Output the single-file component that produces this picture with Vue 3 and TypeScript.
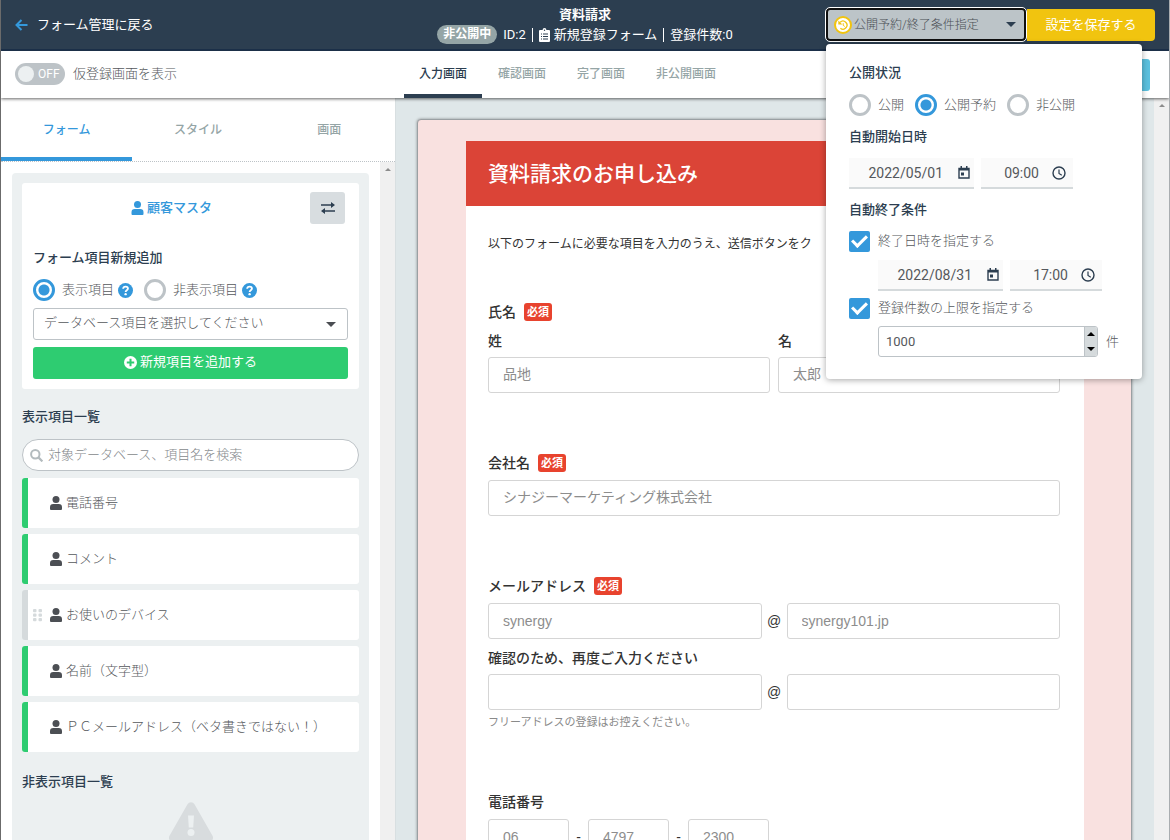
<script setup lang="ts">
import { ref } from 'vue'

interface FieldItem {
  name: string
  color: 'green' | 'gray'
  draggable?: boolean
}

const sideTabs = ['フォーム', 'スタイル', '画面']
const screenTabs = ['入力画面', '確認画面', '完了画面', '非公開画面']
const activeSide = ref(0)
const activeScreen = ref(0)
const provisional = ref(false)
const fieldKind = ref('show')
const status = ref('reserved')
const useEndDate = ref(true)
const useLimit = ref(true)
const limit = ref(1000)
const keyword = ref('')
const menuOpen = ref(true)

const items: FieldItem[] = [
  { name: '電話番号', color: 'green' },
  { name: 'コメント', color: 'green' },
  { name: 'お使いのデバイス', color: 'gray', draggable: true },
  { name: '名前（文字型）', color: 'green' },
  { name: 'ＰＣメールアドレス（ベタ書きではない！）', color: 'green' },
]
const statuses = [
  { id: 'public', label: '公開' },
  { id: 'reserved', label: '公開予約' },
  { id: 'private', label: '非公開' },
]
const kinds = [
  { id: 'show', label: '表示項目' },
  { id: 'hide', label: '非表示項目' },
]
</script>

<template>
  <div class="app">
    <header class="topbar">
      <a class="back" href="#">
        <svg width="13" height="12" viewBox="0 0 13 12" aria-hidden="true">
          <path d="M6.5 1 1.5 6l5 5M2 6h10.5" fill="none" stroke="#3498db" stroke-width="2" />
        </svg>
        フォーム管理に戻る
      </a>
      <div class="heading">
        <h1>資料請求</h1>
        <p class="meta">
          <span class="pill">非公開中</span>
          <span>ID:2</span>
          <i class="sep"></i>
          <span class="clip">
            <svg width="11" height="14" viewBox="0 0 11 14" aria-hidden="true">
              <path d="M1 2h2.6a1.9 1.9 0 0 1 3.8 0H10a1 1 0 0 1 1 1v10a1 1 0 0 1-1 1H1a1 1 0 0 1-1-1V3a1 1 0 0 1 1-1z" fill="#fff" />
              <path d="M2 6h1M4 6h5M2 8.5h1M4 8.5h5M2 11h1M4 11h5" stroke="#2c3e50" />
              <circle cx="5.500" cy="2.200" r=".7" fill="#2c3e50" />
            </svg>
            新規登録フォーム
          </span>
          <i class="sep"></i>
          <span>登録件数:0</span>
        </p>
      </div>
      <div class="actions">
        <button class="reserve" type="button" :aria-expanded="menuOpen" @click="menuOpen = !menuOpen">
          <svg width="18" height="18" viewBox="0 0 18 18" aria-hidden="true">
            <circle cx="9" cy="9" r="8" fill="#fff" stroke="#f1c40f" stroke-width="2" />
            <path d="M6.200 6.200A4 4 0 1 1 6.400 12.200" fill="none" stroke="#f1c40f" stroke-width="1.300" />
            <path d="M4.300 4.600v4h4z" fill="#f1c40f" />
            <path d="M9.200 7.200v2.200l1.500 1" fill="none" stroke="#f1c40f" />
          </svg>
          <span>公開予約/終了条件指定</span>
          <i class="caret"></i>
        </button>
        <button class="save" type="button">設定を保存する</button>

        <section v-if="menuOpen" class="popover">
          <h2>公開状況</h2>
          <div class="choices">
            <label v-for="s in statuses" :key="s.id">
              <input v-model="status" type="radio" name="status" :value="s.id" />{{ s.label }}
            </label>
          </div>
          <h2>自動開始日時</h2>
          <div class="when">
            <div class="picker date">
              <input type="text" value="2022/05/01" aria-label="自動開始日" />
              <svg width="12" height="13" viewBox="0 0 12 13" aria-hidden="true"><path d="M1 2.500h10v9.500H1z" fill="none" stroke="#2c3e50" stroke-width="1.400" /><path d="M1 2h10v2.500H1zM2.500 0h1.500v2H2.500zM8 0h1.500v2H8zM3 6.500h3v3H3z" fill="#2c3e50" /></svg>
            </div>
            <div class="picker time">
              <input type="text" value="09:00" aria-label="自動開始時刻" />
              <svg width="14" height="14" viewBox="0 0 14 14" aria-hidden="true"><circle cx="7" cy="7" r="6" fill="none" stroke="#2c3e50" stroke-width="1.400" /><path d="M7 3.500v4l2.800 1.700" fill="none" stroke="#2c3e50" stroke-width="1.200" /></svg>
            </div>
          </div>
          <h2>自動終了条件</h2>
          <label class="check"><input v-model="useEndDate" type="checkbox" />終了日時を指定する</label>
          <div class="when nested">
            <div class="picker date">
              <input type="text" value="2022/08/31" aria-label="自動終了日" />
              <svg width="12" height="13" viewBox="0 0 12 13" aria-hidden="true"><path d="M1 2.500h10v9.500H1z" fill="none" stroke="#2c3e50" stroke-width="1.400" /><path d="M1 2h10v2.500H1zM2.500 0h1.500v2H2.500zM8 0h1.500v2H8zM3 6.500h3v3H3z" fill="#2c3e50" /></svg>
            </div>
            <div class="picker time">
              <input type="text" value="17:00" aria-label="自動終了時刻" />
              <svg width="14" height="14" viewBox="0 0 14 14" aria-hidden="true"><circle cx="7" cy="7" r="6" fill="none" stroke="#2c3e50" stroke-width="1.400" /><path d="M7 3.500v4l2.800 1.700" fill="none" stroke="#2c3e50" stroke-width="1.200" /></svg>
            </div>
          </div>
          <label class="check second"><input v-model="useLimit" type="checkbox" />登録件数の上限を指定する</label>
          <div class="limit">
            <div class="number">
              <input v-model="limit" type="number" aria-label="登録件数の上限" />
              <div class="steps">
                <button type="button" aria-label="増やす" @click="limit++"><i class="up"></i></button>
                <button type="button" aria-label="減らす" @click="limit--"><i class="down"></i></button>
              </div>
            </div>
            <span>件</span>
          </div>
        </section>
      </div>
    </header>

    <div class="subbar">
      <label class="switch">
        <input v-model="provisional" type="checkbox" />
        <span class="track"><i class="knob"></i>OFF</span>
        仮登録画面を表示
      </label>
      <nav class="screens">
        <button v-for="(t, i) in screenTabs" :key="t" type="button" :class="{ active: i === activeScreen }" @click="activeScreen = i">{{ t }}</button>
      </nav>
      <button class="preview-button" type="button" aria-label="プレビュー"></button>
    </div>

    <div class="body">
      <aside class="side">
        <nav class="side-tabs">
          <button v-for="(t, i) in sideTabs" :key="t" type="button" :class="{ active: i === activeSide }" @click="activeSide = i">{{ t }}</button>
        </nav>
        <div class="side-scroll">
          <div class="panel">
            <section class="card">
              <div class="master">
                <strong>
                  <svg width="13" height="14" viewBox="0 0 12 14" aria-hidden="true"><circle cx="6" cy="3.500" r="3.500" fill="#3498db" /><path d="M3.300 8h5.400A3.300 3.300 0 0 1 12 11.300V13a1 1 0 0 1-1 1H1a1 1 0 0 1-1-1v-1.700A3.300 3.300 0 0 1 3.300 8z" fill="#3498db" /></svg>
                  顧客マスタ
                </strong>
                <button type="button" class="swap" aria-label="切り替え">
                  <svg width="14" height="12" viewBox="0 0 14 12" aria-hidden="true"><path d="M0 3h11M3 9h11" stroke="#2c3e50" stroke-width="1.600" /><path d="M10 0l4 3-4 3zM4 6L0 9l4 3z" fill="#2c3e50" /></svg>
                </button>
              </div>
              <h2>フォーム項目新規追加</h2>
              <div class="choices">
                <div v-for="k in kinds" :key="k.id" class="kind">
                  <label><input v-model="fieldKind" type="radio" name="kind" :value="k.id" />{{ k.label }}</label>
                  <svg width="15" height="15" viewBox="0 0 14 14" aria-hidden="true"><circle cx="7" cy="7" r="7" fill="#3498db" /><path d="M4.800 5.400C4.900 3.900 6 3.300 7.100 3.300c1.200 0 2.200.7 2.200 1.900 0 1.500-2.200 1.500-2.200 3.100" fill="none" stroke="#fff" stroke-width="1.700" /><circle cx="7.100" cy="10.400" r="1.100" fill="#fff" /></svg>
                </div>
              </div>
              <div class="select">
                <select aria-label="データベース項目"><option>データベース項目を選択してください</option></select>
                <i class="caret"></i>
              </div>
              <button type="button" class="add">
                <svg width="13" height="13" viewBox="0 0 14 14" aria-hidden="true"><circle cx="7" cy="7" r="7" fill="#fff" /><path d="M7 3v8M3 7h8" stroke="#2ecc71" stroke-width="2.200" /></svg>
                新規項目を追加する
              </button>
            </section>

            <h2 class="list-title">表示項目一覧</h2>
            <label class="search">
              <svg width="13" height="13" viewBox="0 0 13 13" aria-hidden="true"><circle cx="5.300" cy="5.300" r="4.200" fill="none" stroke="#b3bbbe" stroke-width="2" /><path d="M8.400 8.400l4 4" stroke="#b3bbbe" stroke-width="2.200" /></svg>
              <input v-model="keyword" type="search" placeholder="対象データベース、項目名を検索" aria-label="対象データベース、項目名を検索" />
            </label>
            <ul class="items">
              <li v-for="item in items" :key="item.name" :class="item.color">
                <span class="grip">
                  <svg v-if="item.draggable" width="10" height="13" viewBox="0 0 10 13" aria-hidden="true">
                    <g fill="#d5dadc">
                      <rect width="3.500" height="3.300" rx="1" /><rect x="5.500" width="3.500" height="3.300" rx="1" />
                      <rect y="4.500" width="3.500" height="3.300" rx="1" /><rect x="5.500" y="4.500" width="3.500" height="3.300" rx="1" />
                      <rect y="9" width="3.500" height="3.300" rx="1" /><rect x="5.500" y="9" width="3.500" height="3.300" rx="1" />
                    </g>
                  </svg>
                </span>
                <svg width="12" height="14" viewBox="0 0 12 14" aria-hidden="true"><circle cx="6" cy="3.500" r="3.500" fill="#4c4f54" /><path d="M3.300 8h5.400A3.300 3.300 0 0 1 12 11.300V13a1 1 0 0 1-1 1H1a1 1 0 0 1-1-1v-1.700A3.300 3.300 0 0 1 3.300 8z" fill="#4c4f54" /></svg>
                {{ item.name }}
              </li>
            </ul>
            <h2 class="hidden-title">非表示項目一覧</h2>
            <div class="empty">
              <svg width="44" height="40" viewBox="0 0 44 40" aria-hidden="true"><path d="M18.500 2.200a4 4 0 0 1 7 0l18 31.600a4 4 0 0 1-3.500 6H4a4 4 0 0 1-3.500-6z" fill="#d8dcde" /><path d="M19 13.500h6l-.8 12h-4.400z" fill="#ecf0f1" /><circle cx="22" cy="30.500" r="3.500" fill="#ecf0f1" /></svg>
            </div>
          </div>
          <div class="scrollbar"><i class="mini-up"></i></div>
        </div>
      </aside>

      <main class="stage">
        <div class="canvas">
          <article class="sheet">
            <div class="form">
              <h2 class="form-title">資料請求のお申し込み</h2>
              <div class="form-body">
                <p class="intro">以下のフォームに必要な項目を入力のうえ、送信ボタンをク</p>

                <fieldset>
                  <legend>氏名<em>必須</em></legend>
                  <div class="row names">
                    <label>姓<input type="text" placeholder="品地" /></label>
                    <label>名<input type="text" placeholder="太郎" /></label>
                  </div>
                </fieldset>

                <fieldset>
                  <legend><label for="company">会社名</label><em>必須</em></legend>
                  <input id="company" class="company" type="text" placeholder="シナジーマーケティング株式会社" />
                </fieldset>

                <fieldset>
                  <legend>メールアドレス<em>必須</em></legend>
                  <div class="row mail">
                    <input type="text" placeholder="synergy" aria-label="メールアドレスのアカウント" />
                    <span>@</span>
                    <input type="text" placeholder="synergy101.jp" aria-label="メールアドレスのドメイン" />
                  </div>
                  <p class="confirm">確認のため、再度ご入力ください</p>
                  <div class="row mail again">
                    <input type="text" aria-label="確認用アカウント" />
                    <span>@</span>
                    <input type="text" aria-label="確認用ドメイン" />
                  </div>
                  <p class="note">フリーアドレスの登録はお控えください。</p>
                </fieldset>

                <fieldset>
                  <legend>電話番号</legend>
                  <div class="row phone">
                    <input type="text" placeholder="06" aria-label="市外局番" />
                    <span>-</span>
                    <input type="text" placeholder="4797" aria-label="市内局番" />
                    <span>-</span>
                    <input type="text" placeholder="2300" aria-label="加入者番号" />
                  </div>
                </fieldset>
              </div>
            </div>
          </article>
        </div>
        <div class="scrollbar"><i class="mini-up"></i></div>
      </main>
    </div>
  </div>
</template>

<style>
body {
  margin: 0;
}
</style>

<style scoped>
* {
  box-sizing: border-box;
}
.app {
  height: 100vh;
  display: flex;
  flex-direction: column;
  overflow: hidden;
  border-left: 1px solid #6b6b6b;
  border-right: 1px solid #a9adb0;
  background: #fff;
  color: #55585c;
  font-family: Roboto, "Noto Sans CJK JP", sans-serif;
  font-size: 13px;
  font-weight: 300;
  line-height: 20px;
}
h1,
h2,
p,
ul {
  margin: 0;
  padding: 0;
}
h2 {
  font-size: 13px;
  line-height: 20px;
  font-weight: 500;
  color: #2c3e50;
}
button,
input,
select {
  font: inherit;
  color: inherit;
  margin: 0;
  padding: 0;
  border: 0;
  border-radius: 0;
  background: none;
}
button {
  cursor: pointer;
}
svg {
  display: block;
  flex: none;
}

.topbar {
  position: relative;
  z-index: 2;
  display: grid;
  grid-template-columns: 1fr auto 1fr;
  align-items: center;
  height: 51px;
  flex: none;
  padding: 0 14px;
  background: #2c3e50;
  border-bottom: 2px solid #1b2f48;
  color: #fff;
  font-weight: 400;
}
.back {
  display: flex;
  align-items: center;
  gap: 9px;
  color: #fff;
  text-decoration: none;
}
.heading h1 {
  font-size: 13px;
  line-height: 20px;
  font-weight: 700;
  text-align: center;
}
.meta {
  display: flex;
  align-items: center;
  gap: 6px;
  white-space: nowrap;
}
.pill {
  padding: 0 6px;
  border-radius: 10px;
  background: #95a5a6;
  font-size: 12px;
  line-height: 19px;
  font-weight: 700;
}
.sep {
  width: 1px;
  height: 14px;
  background: #fff;
}
.clip {
  display: flex;
  align-items: center;
  gap: 4px;
}
.actions {
  position: relative;
  justify-self: end;
  display: flex;
  align-items: center;
}
.reserve {
  display: flex;
  align-items: center;
  gap: 2px;
  width: 200px;
  height: 33px;
  padding: 0 8px 0 6px;
  border: 2px solid #101010;
  border-radius: 4px;
  outline: 1px solid #fff;
  background: #bcc4c8;
  color: #4a4f55;
  font-size: 12px;
  font-weight: 300;
}
.reserve .caret {
  border-top-color: #2c3e50;
}
.caret {
  margin-left: auto;
  border: 5px solid transparent;
  border-top-color: #4a4d52;
  border-bottom: 0;
}
.save {
  width: 128px;
  height: 32px;
  margin-left: 1px;
  border-radius: 0 4px 4px 0;
  background: #f1c40f;
  color: #fff;
}

.popover {
  position: absolute;
  z-index: 5;
  top: 36px;
  left: 0;
  width: 316px;
  padding: 19px 23px 22px;
  border-radius: 4px;
  background: #fff;
  box-shadow: 0 1px 6px rgba(0, 0, 0, 0.35);
  color: #55585c;
  font-weight: 300;
}
.choices {
  display: flex;
  gap: 11px;
  margin: 11px 0;
}
.choices label,
.check {
  display: flex;
  align-items: center;
  gap: 7px;
  height: 22px;
}
.choices input {
  appearance: none;
  width: 22px;
  height: 22px;
  border: 3px solid #bdc3c7;
  border-radius: 50%;
  background: #fff;
}
.choices input:checked {
  border-color: #3498db;
  background: radial-gradient(circle, #3498db 5px, #fff 6px);
}
.when {
  display: flex;
  gap: 7px;
  margin: 11px 0;
}
.when.nested {
  margin: 8px 0 6px 29px;
}
.picker {
  display: flex;
  align-items: center;
  justify-content: flex-end;
  height: 31px;
  border-bottom: 2px solid #d5dadc;
  background: #fafafa;
}
.picker input {
  min-width: 0;
  flex: 1;
  text-align: right;
  font-size: 14px;
  font-weight: 400;
}
.date {
  width: 125px;
  gap: 15px;
  padding-right: 4px;
}
.time {
  width: 92px;
  gap: 13px;
  padding-right: 7px;
}
.check {
  gap: 8px;
  margin-top: 10px;
}
.check.second {
  margin-top: 0;
}
.check input {
  appearance: none;
  display: grid;
  place-items: center;
  width: 21px;
  height: 21px;
  border-radius: 2px;
  background: #ccc;
}
.check input:checked {
  background: #3498db;
}
.check input:checked::before {
  content: "";
  width: 12px;
  height: 6px;
  margin-bottom: 4px;
  border-left: 3px solid #fff;
  border-bottom: 3px solid #fff;
  transform: rotate(-45deg);
}
.limit {
  display: flex;
  align-items: center;
  gap: 8px;
  margin: 7px 0 0 29px;
}
.number {
  display: flex;
  width: 221px;
  height: 31px;
  border: 1px solid #bdc3c7;
  border-radius: 3px;
  overflow: hidden;
}
.number input {
  flex: 1;
  min-width: 0;
  padding-left: 7px;
  appearance: textfield;
  font-weight: 400;
}
.number input::-webkit-inner-spin-button {
  display: none;
}
.steps {
  display: grid;
  grid-template-rows: 1fr 1fr;
  width: 13px;
  background: #d5dadc;
  border-left: 1px solid #bdc3c7;
}
.steps button {
  display: grid;
  place-items: center;
}
.up,
.down {
  border: 4px solid transparent;
}
.up {
  border-top: 0;
  border-bottom-color: #000;
}
.down {
  border-bottom: 0;
  border-top-color: #000;
}

.subbar {
  position: relative;
  z-index: 1;
  display: grid;
  grid-template-columns: 403px 1fr auto;
  align-items: center;
  flex: none;
  height: 47px;
  padding-right: 19px;
  background: #fff;
  box-shadow: 0 1px 3px rgba(0, 0, 0, 0.6);
}
.switch {
  display: flex;
  align-items: center;
  gap: 8px;
  padding: 0 0 2px 14px;
}
.switch input {
  position: absolute;
  opacity: 0;
}
.track {
  display: flex;
  align-items: center;
  gap: 4px;
  width: 50px;
  height: 22px;
  padding-left: 3px;
  border-radius: 11px;
  background: #bdc3c7;
  color: #fff;
  font-size: 12px;
  font-weight: 400;
}
.knob {
  width: 16px;
  height: 16px;
  border-radius: 50%;
  background: #ecf0f1;
}
.screens {
  align-self: stretch;
  display: flex;
  gap: 1px;
}
.screens button {
  padding: 2px 15px 0;
  border-bottom: 4px solid transparent;
  color: #95a5a6;
  font-size: 12px;
  font-weight: 500;
}
.screens .active {
  border-color: #2c3e50;
  color: #2c3e50;
}
.preview-button {
  width: 90px;
  height: 32px;
  border-radius: 3px;
  background: #5bc0de;
}

.body {
  flex: 1;
  min-height: 0;
  display: flex;
}
.side {
  flex: 0 0 395px;
  display: flex;
  flex-direction: column;
  border-right: 1px solid #d8dfe1;
}
.side-tabs {
  flex: none;
  display: grid;
  grid-template-columns: repeat(3, 1fr);
  height: 64px;
  border-bottom: 1px dotted #bdc3c7;
}
.side-tabs button {
  padding-top: 4px;
  border-bottom: 4px solid transparent;
  color: #95a5a6;
  font-size: 12px;
  font-weight: 500;
}
.side-tabs .active {
  border-color: #3498db;
  color: #3498db;
}
.side-scroll {
  flex: 1;
  min-height: 0;
  display: flex;
}
.panel {
  flex: 1;
  min-width: 0;
  margin: 11px 11px 0;
  padding: 10px;
  border-radius: 4px 4px 0 0;
  background: #ecf0f1;
  overflow: hidden;
}
.scrollbar {
  flex: 0 0 15px;
  background: #f0f0f0;
}
.mini-up {
  display: block;
  width: 0;
  margin: 6px auto 0;
  border: 3px solid transparent;
  border-top: 0;
  border-bottom-color: #8c8c8c;
}
.card {
  padding: 9px 11px 10px;
  border-radius: 3px;
  background: #fff;
}
.master {
  display: flex;
  align-items: center;
  padding-right: 3px;
}
.master strong {
  flex: 1;
  display: flex;
  justify-content: center;
  align-items: center;
  gap: 3px;
  color: #3498db;
  font-weight: 500;
}
.swap {
  display: grid;
  place-items: center;
  width: 35px;
  height: 32px;
  border-radius: 3px;
  background: #d8dde0;
}
.card h2 {
  margin-top: 24px;
}
.card .choices {
  margin-bottom: 7px;
}
.kind {
  display: flex;
  align-items: center;
  gap: 4px;
}
.select {
  display: flex;
  align-items: center;
  height: 32px;
  padding-right: 11px;
  border: 1px solid #bdc3c7;
  border-radius: 3px;
}
.select select {
  appearance: none;
  flex: 1;
  min-width: 0;
  height: 30px;
  padding: 0 0 2px 10px;
}
.add {
  display: flex;
  justify-content: center;
  align-items: center;
  gap: 3px;
  width: 100%;
  height: 32px;
  margin-top: 7px;
  padding-bottom: 2px;
  border-radius: 3px;
  background: #2ecc71;
  color: #fff;
  font-weight: 400;
}
.list-title {
  margin: 18px 0 12px;
}
.search {
  display: flex;
  align-items: center;
  gap: 5px;
  height: 32px;
  padding: 0 12px 0 7px;
  border: 1px solid #bdc3c7;
  border-radius: 16px;
  background: #fff;
}
.search input {
  appearance: none;
  outline: 0;
  flex: 1;
  min-width: 0;
}
.search input::placeholder {
  color: #85898c;
}
.items {
  list-style: none;
  display: grid;
  gap: 6px;
  margin-top: 7px;
}
.items li {
  display: flex;
  align-items: center;
  gap: 4px;
  height: 50px;
  border-left: 6px solid #d5dadc;
  border-radius: 3px;
  background: #fff;
}
.items .green {
  border-color: #2ecc71;
}
.grip {
  width: 18px;
  padding-left: 5px;
}
.hidden-title {
  margin-top: 20px;
}
.empty {
  display: flex;
  justify-content: center;
  margin-top: 10px;
}

.stage {
  flex: 1;
  min-width: 0;
  display: flex;
  background: #dfe7e9;
}
.canvas {
  flex: 1;
  min-width: 0;
  padding: 21px 22px 0 21px;
  overflow: hidden;
}
.sheet {
  padding: 21px 47px 0 48px;
  border: 1px solid #9aa0a3;
  border-radius: 4px 4px 0 0;
  background: #f9e1e0;
  box-shadow: 0 0 3px rgba(0, 0, 0, 0.4);
  font-family: "Liberation Sans", "Noto Sans CJK JP", sans-serif;
  font-size: 14px;
  font-weight: 400;
  color: #333;
}
.form {
  background: #fff;
}
.form-title {
  padding: 0 22px;
  background: #db4437;
  color: #fff;
  font-size: 21px;
  line-height: 65px;
  font-weight: 500;
}
.form-body {
  padding: 28px 24px 60px 22px;
}
.intro {
  margin-bottom: 48px;
  font-size: 12px;
  white-space: nowrap;
}
fieldset {
  min-width: 0;
  margin: 0 0 60px;
  padding: 0;
  border: 0;
}
legend {
  display: flex;
  align-items: center;
  gap: 8px;
  height: 20px;
  padding: 0;
  font-weight: 500;
}
em {
  padding: 0 3px;
  border-radius: 3px;
  background: #e8432e;
  color: #fff;
  font-size: 11px;
  line-height: 18px;
  font-style: normal;
  font-weight: 700;
}
.sheet input {
  display: block;
  width: 100%;
  min-width: 0;
  height: 36px;
  padding: 0 14px;
  border: 1px solid #d5d5d5;
  border-radius: 3px;
  background: #fff;
}
.sheet input::placeholder {
  color: #8d8d8d;
}
.row {
  display: flex;
  align-items: center;
  margin-top: 7px;
}
.names {
  gap: 8px;
  margin-top: 9px;
}
.names label {
  flex: 1;
  min-width: 0;
  font-weight: 500;
}
.names input {
  margin-top: 6px;
  padding-bottom: 2px;
  font-weight: 400;
}
.sheet .company {
  margin-top: 7px;
  padding-bottom: 2px;
}
.mail span {
  flex: 0 0 25px;
  text-align: center;
}
.confirm {
  margin-top: 9px;
  font-weight: 500;
}
.again {
  margin-top: 6px;
}
.note {
  margin-top: 2px;
  color: #8a8a8a;
  font-size: 11px;
}
.phone input {
  flex: 0 0 81px;
}
.phone span {
  flex: 0 0 19px;
  text-align: center;
}
</style>
